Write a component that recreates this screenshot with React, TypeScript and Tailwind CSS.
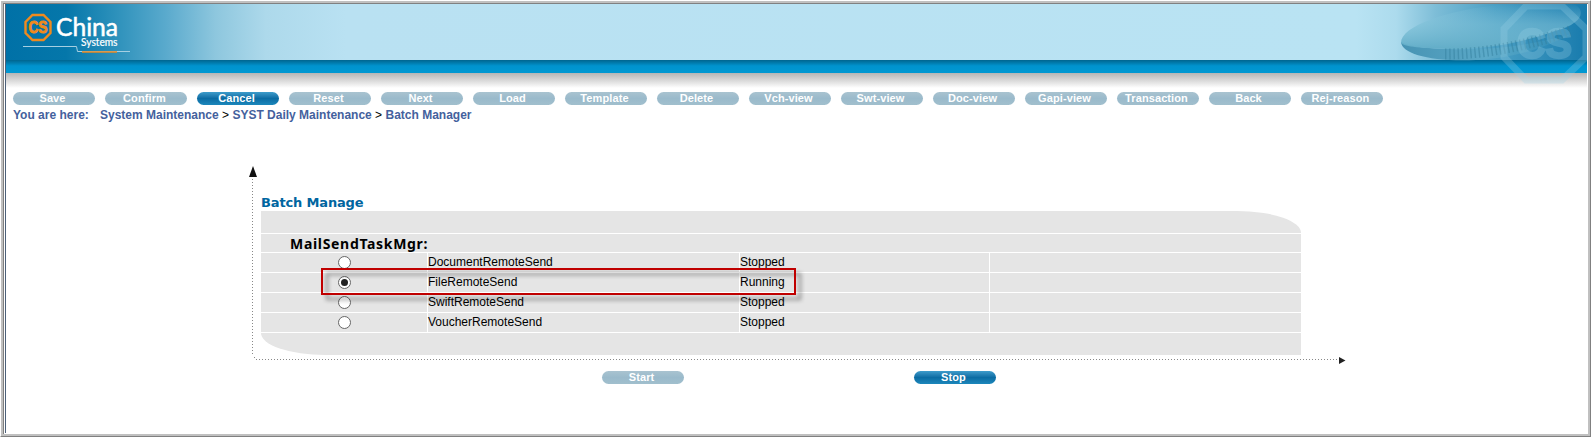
import React from "react";

const toolbar = ["Save", "Confirm", "Cancel", "Reset", "Next", "Load", "Template", "Delete", "Vch-view", "Swt-view", "Doc-view", "Gapi-view", "Transaction", "Back", "Rej-reason"];

const tasks = [
  { name: "DocumentRemoteSend", status: "Stopped" },
  { name: "FileRemoteSend", status: "Running" },
  { name: "SwiftRemoteSend", status: "Stopped" },
  { name: "VoucherRemoteSend", status: "Stopped" },
];

function Pill({ label, active }: { label: string; active?: boolean }) {
  return (
    <button
      className={
        "flex h-[13px] w-[82px] shrink-0 items-center justify-center rounded-full pr-[3px] font-['Liberation_Sans'] text-[11px] leading-[13px] font-bold tracking-[0.1px] text-white " +
        (active
          ? "bg-linear-to-b from-[#3d9ccb] via-[#0b6ca3] to-[#1c87bb]"
          : "bg-linear-to-b from-[#a9c3d0] via-[#9abacb] to-[#a1bfcd]")
      }
    >
      {label}
    </button>
  );
}

function Logo() {
  return (
    <svg className="absolute top-[6px] left-[14px]" width="120" height="46" viewBox="20 10 120 46">
      <path d="M32.500 15h11l7 7v11l-7 7h-11l-7-7V22z" fill="none" stroke="#f08a1d" strokeWidth="2.400" />
      <text x="28.500" y="33" fontFamily="Liberation Sans" fontWeight="700" fontSize="16" textLength="19" lengthAdjust="spacingAndGlyphs" fill="#f08a1d" stroke="#f08a1d" strokeWidth=".9">CS</text>
      <text x="56" y="36" fontFamily="Lato" fontSize="25" textLength="62" lengthAdjust="spacingAndGlyphs" fill="#fff" stroke="#fff" strokeWidth=".5">China</text>
      <text x="81" y="46" fontFamily="Lato" fontSize="10.500" textLength="36.500" lengthAdjust="spacingAndGlyphs" fill="#fff" stroke="#fff" strokeWidth=".2">Systems</text>
      <path d="M23 46.500h53.500l1 5H130" fill="none" stroke="#a5cfe2" strokeWidth="1" />
      <path d="M82 52h35" stroke="#e98920" strokeWidth="1.600" />
    </svg>
  );
}

function BannerArt() {
  return (
    <svg className="absolute top-0 right-0" width="207" height="80" viewBox="1380 4 207 80">
      <defs>
        <linearGradient id="disc" x1="0" y1="0" x2="1" y2="0">
          <stop offset="0" stopColor="#4793b3" />
          <stop offset=".5" stopColor="#5ba9c8" />
          <stop offset="1" stopColor="#3a94ba" stopOpacity=".2" />
        </linearGradient>
        <linearGradient id="discTop" x1="0" y1="0" x2="0" y2="1">
          <stop offset="0" stopColor="#8ccadf" stopOpacity="0" />
          <stop offset=".45" stopColor="#7cbfd6" stopOpacity=".6" />
          <stop offset="1" stopColor="#62adc8" />
        </linearGradient>
      </defs>
      <path d="M1401 42c1 12 30 20 75 18 45-2 75-16 96-26-30 8-60 14-96 15-40 1-68-2-75-7z" fill="url(#disc)" />
      <path d="M1401 43c0-17 45-33 105-39h67c14 5 10 20-18 27-40 14-75 19-107 18-24-1-44-2-47-6z" fill="url(#discTop)" />
      <path d="M1445 54C1490 54 1530 44 1570 31" fill="none" stroke="#347f9e" strokeOpacity=".5" strokeWidth="11" strokeDasharray="1.400 2.800" />
      <g fill="none" stroke="#9ed4e8" opacity=".27">
        <path d="M1526 6h36l24 23v28l-24 23h-36l-22-23V29z" strokeWidth="7" />
        <text x="1517" y="58" fontFamily="Liberation Sans" fontWeight="700" fontSize="42" textLength="55" lengthAdjust="spacingAndGlyphs" fill="#9ed4e8" strokeWidth="2.500">CS</text>
      </g>
    </svg>
  );
}

function Radio({ checked }: { checked?: boolean }) {
  return (
    <span className="flex size-[13px] items-center justify-center rounded-full border border-[#666] bg-white">
      {checked && <span className="size-[7px] rounded-full bg-[#222]" />}
    </span>
  );
}

export default function App() {
  return (
    <div className="h-[437px] w-[1591px] overflow-hidden border border-t-white border-r-[#808080] border-b-[#808080] border-l-white bg-white">
      <div className="h-[435px] border-2 border-[#c0c0c0]">
        <div className="h-[431px] border-t border-l border-[#808080] pr-px pl-px">
          <div className="flex h-[429px] flex-col border-l border-[#4c6079]">
            <header className="relative h-[84px] shrink-0">
              <div className="h-14 bg-[linear-gradient(90deg,#0071a7_0px,#0577aa_60px,#2d91bb_110px,#5aaacd_160px,#8ec7de_210px,#add9eb_260px,#b9e1f2_340px,#b9e3f3_1350px,#acdbed_1390px,#7dbdd7_1430px,#4a9fc4_1490px,#187bad_1580px)]" />
              <div className="h-[13px] bg-linear-to-b from-[#00658f] from-0% via-[#0093ce] via-45% to-[#0098d2]" />
              <div className="h-[15px] bg-linear-to-b from-[#b5b5b5] to-white" />
              <Logo />
              <BannerArt />
            </header>

            <nav className="mt-[4px] flex shrink-0 gap-[10px] pl-[7px]">
              {toolbar.map((t) => <Pill key={t} label={t} active={t === "Cancel"} />)}
            </nav>

            <div className="mt-[3px] flex h-[15px] shrink-0 pl-[7px] font-['Liberation_Sans'] text-[12px] leading-[15px] font-bold whitespace-pre text-[#44619d]">
              <span className="w-[87px]">You are here:</span>
              <span>System Maintenance <b className="font-normal text-black">&gt;</b> SYST Daily Maintenance <b className="font-normal text-black">&gt;</b> Batch Manager</span>
            </div>

            <main className="relative mt-[43px] ml-[242px] h-[199px] w-[1098px] shrink-0">
              <svg className="absolute inset-0" width="1098" height="199" viewBox="248 166 1098 199">
                <path d="M253 166l4 11h-8z" fill="#111" />
                <path d="M252.500 179v176M254 357.500h1M256 359.500H1338" stroke="#888" fill="none" strokeDasharray="1 2" />
                <path d="M1339 357l6.500 3.500-6.500 3.500z" fill="#222" />
              </svg>
              <section className="relative pt-[28px] pl-[13px] font-['Liberation_Sans'] text-[12px] text-black">
                <h1 className="h-[17px] font-['DejaVu_Sans'] text-[13px] leading-[17px] font-bold tracking-[-0.15px] text-[#0065a0]">Batch Manage</h1>
                <div className="flex w-[1040px] flex-col gap-px">
                  <div className="h-[22px] rounded-tr-[64px_22px] bg-[#e5e5e5]" />
                  <div className="h-[18px] bg-[#e5e5e5] pl-[29px] font-['Noto_Sans'] text-[14px] leading-[20px] font-bold tracking-[0.68px]">MailSendTaskMgr:</div>
                  {tasks.map((t) => (
                    <div key={t.name} className="grid h-[19px] grid-cols-[166px_311px_249px_311px] gap-px leading-[18px]">
                      <div className="flex items-center justify-center bg-[#e5e5e5]"><Radio checked={t.status === "Running"} /></div>
                      <div className="bg-[#e5e5e5]">{t.name}</div>
                      <div className="bg-[#e5e5e5]">{t.status}</div>
                      <div className="bg-[#e5e5e5]" />
                    </div>
                  ))}
                  <div className="h-[22px] rounded-bl-[64px_22px] bg-[#e5e5e5]" />
                </div>
              </section>
              <div className="absolute top-[102px] left-[73px] h-[27px] w-[475px] border-2 border-[#c00000] drop-shadow-[5px_5px_2px_rgba(0,0,0,0.45)]" />
            </main>

            <footer className="mt-[6px] flex shrink-0 gap-[230px] pl-[596px]">
              <Pill label="Start" />
              <Pill label="Stop" active />
            </footer>
          </div>
        </div>
      </div>
    </div>
  );
}
